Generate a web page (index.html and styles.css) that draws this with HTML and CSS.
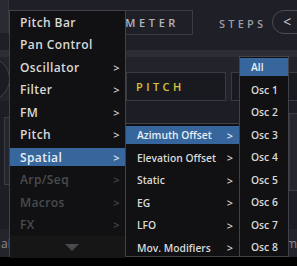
FILE: index.html
```html
<!DOCTYPE html>
<html lang="en">
<head>
    <meta charset="UTF-8">
    <meta name="viewport" content="width=device-width, initial-scale=1.0">
    <title>Modulation Source Menu</title>
    <link rel="stylesheet" href="styles.css">
</head>
<body>
    <div id="app">
        <div class="top-bar">
            <div class="side-tab"></div>
            <div class="tab-button">PARAMETER</div>
            <div class="steps-label">STEPS</div>
            <div class="back-button">&lt;</div>
        </div>
        <div class="band"></div>
        <div class="lane">
            <div class="knob"></div>
            <div class="lane-box pitch-box">PITCH</div>
            <div class="lane-box"></div>
        </div>
        <div class="panels">
            <div class="panel left-panel"></div>
            <div class="panel right-panel"></div>
        </div>
        <div class="bottom-bar">
            <span>ai</span>
            <span>m</span>
        </div>
    </div>

    <div class="menu main-menu">
        <div class="item">Pitch Bar</div>
        <div class="item">Pan Control</div>
        <div class="item">Oscillator<span class="arrow">&gt;</span></div>
        <div class="item">Filter<span class="arrow">&gt;</span></div>
        <div class="item">FM<span class="arrow">&gt;</span></div>
        <div class="item">Pitch<span class="arrow">&gt;</span></div>
        <div class="item active">Spatial<span class="arrow">&gt;</span></div>
        <div class="item disabled">Arp/Seq<span class="arrow">&gt;</span></div>
        <div class="item disabled">Macros<span class="arrow">&gt;</span></div>
        <div class="item disabled">FX<span class="arrow">&gt;</span></div>
        <div class="menu-footer"><span class="scroll-down"></span></div>
    </div>

    <div class="menu sub-menu">
        <div class="item active">Azimuth Offset<span class="arrow">&gt;</span></div>
        <div class="item">Elevation Offset<span class="arrow">&gt;</span></div>
        <div class="item">Static<span class="arrow">&gt;</span></div>
        <div class="item">EG<span class="arrow">&gt;</span></div>
        <div class="item">LFO<span class="arrow">&gt;</span></div>
        <div class="item">Mov. Modifiers<span class="arrow">&gt;</span></div>
    </div>

    <div class="menu osc-menu">
        <div class="item active">All</div>
        <div class="item">Osc 1</div>
        <div class="item">Osc 2</div>
        <div class="item">Osc 3</div>
        <div class="item">Osc 4</div>
        <div class="item">Osc 5</div>
        <div class="item">Osc 6</div>
        <div class="item">Osc 7</div>
        <div class="item">Osc 8</div>
    </div>
</body>
</html>
```

FILE: styles.css
```css
body {
    margin: 0;
    padding: 0;
    width: 297px;
    height: 266px;
    overflow: hidden;
    background-color: #000000;
    font-family: "Open Sans", "Liberation Sans", sans-serif;
    position: relative;
}
#app {
    height: 257px;
    background-color: #1d1e25;
    display: flex;
    flex-direction: column;
    overflow: hidden;
}
.top-bar {
    height: 50px;
    display: flex;
    align-items: flex-start;
    background-color: #1e1f27;
}
.side-tab {
    width: 8px;
    height: 33px;
    background-color: #292a32;
    border-right: 1px solid #34353d;
    flex-shrink: 0;
}
.tab-button {
    width: 118px;
    height: 23px;
    margin-top: 10px;
    margin-left: 51px;
    border: 1px solid #3a3b43;
    box-sizing: content-box;
    display: flex;
    align-items: center;
    justify-content: flex-end;
    padding-right: 13px;
    color: #b4b5bc;
    font-size: 11px;
    font-weight: 600;
    letter-spacing: 3.6px;
    flex-shrink: 0;
}
.steps-label {
    margin-top: 16px;
    margin-left: 26px;
    color: #9c9da4;
    font-size: 11px;
    font-weight: 600;
    letter-spacing: 3.2px;
    flex-shrink: 0;
}
.back-button {
    margin-top: 10px;
    margin-left: 6px;
    width: 40px;
    height: 22px;
    border: 1px solid #4a4b53;
    border-radius: 12px 0 0 12px;
    color: #c8c9cf;
    font-size: 14px;
    padding-left: 10px;
    line-height: 21px;
    flex-shrink: 0;
}
.band {
    height: 7px;
    background-color: #2c2d35;
}
.lane {
    height: 44px;
    display: flex;
    align-items: flex-start;
    background-color: #23242b;
}
.knob {
    width: 42px;
    height: 42px;
    margin-left: -34px;
    border-radius: 50%;
    border: 1px solid #3e3f47;
    background-color: #1b1c22;
    flex-shrink: 0;
}
.lane-box {
    height: 27px;
    margin-top: 15px;
    border: 1px solid #393a42;
    background-color: #191a20;
    flex-shrink: 0;
}
.pitch-box {
    width: 89px;
    margin-left: 116px;
    display: flex;
    align-items: center;
    padding-left: 9px;
    color: #d8c43e;
    font-size: 11px;
    font-weight: 600;
    letter-spacing: 3.4px;
}
.pitch-box + .lane-box {
    width: 80px;
    margin-left: 5px;
}
.panels {
    flex: 1;
    display: flex;
    justify-content: space-between;
    padding-top: 12px;
    background-color: #1d1e25;
}
.panel {
    border: 1px solid #3a3b43;
    background-color: #25262e;
}
.left-panel {
    width: 40px;
    height: 66px;
    margin-left: 4px;
    margin-top: 4px;
}
.right-panel {
    width: 30px;
    height: 76px;
    margin-right: -24px;
}
.bottom-bar {
    height: 28px;
    display: flex;
    justify-content: space-between;
    align-items: center;
    background-color: #24252c;
    color: #8a8b92;
    font-size: 12px;
    padding: 0 0 0 1px;
}
.menu {
    position: absolute;
    background-color: #111113;
    border: 1px solid #414147;
    box-sizing: border-box;
}
.item {
    height: 18px;
    margin-bottom: 4.5px;
    display: flex;
    align-items: center;
    justify-content: space-between;
    color: #d9d9d9;
    font-size: 12px;
    font-weight: 600;
    letter-spacing: 0.4px;
    white-space: nowrap;
}
.item.active {
    background-color: #36669c;
    color: #e8eef5;
}
.item.disabled {
    color: #4b4b4e;
}
.arrow {
    font-size: 11px;
    font-weight: 600;
}
.main-menu {
    left: 9px;
    top: 10px;
    width: 117px;
    height: 247px;
    padding-top: 2px;
}
.main-menu .item {
    padding: 0 5px 0 10px;
}
.menu-footer {
    height: 22px;
    margin-top: -2px;
    background-color: #161617;
    display: flex;
    justify-content: center;
    align-items: center;
}
.scroll-down {
    width: 0;
    height: 0;
    border-left: 7px solid transparent;
    border-right: 7px solid transparent;
    border-top: 7px solid #4a4a4e;
    margin-left: 8px;
}
.sub-menu {
    left: 125px;
    top: 123px;
    width: 115px;
    height: 134px;
    padding-top: 2px;
}
.sub-menu .item {
    padding: 0 6px 0 11px;
    font-size: 10.3px;
    letter-spacing: 0;
}
.osc-menu {
    left: 239px;
    top: 56px;
    width: 50px;
    height: 201px;
    padding-top: 1px;
}
.osc-menu .item {
    padding: 0 0 0 11px;
    font-size: 10.3px;
    letter-spacing: 0;
}
```
